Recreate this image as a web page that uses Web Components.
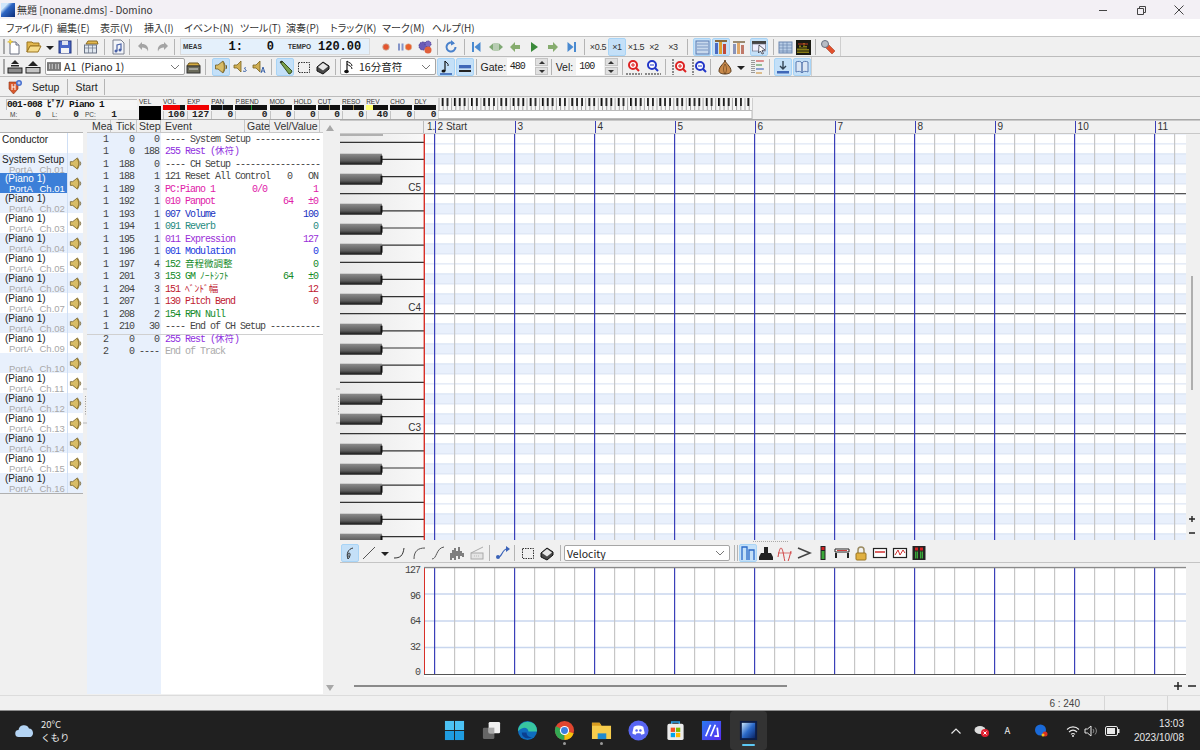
<!DOCTYPE html>
<html lang="ja">
<head>
<meta charset="utf-8">
<title>Domino</title>
<style>
  html, body { margin: 0; padding: 0; background: #f0f0f0; overflow: hidden; }
  body { width: 1200px; height: 750px; font-family: "Liberation Sans", "Noto Sans CJK JP", sans-serif; }
</style>
</head>
<body>
<dm-app></dm-app>
<script>
const UI_FONT = '"Noto Sans CJK JP", "Liberation Sans", sans-serif';
const LIST_FONT = '"Liberation Sans", "Noto Sans CJK JP", sans-serif';
const MONO_FONT = '"Liberation Mono", "Noto Sans CJK JP", monospace';

// 16x16 toolbar glyphs
const ICONS = {
  new: '<path d="M4 3h6l3 3v9H4z" fill="#fff" stroke="#6a7080"/><path d="M10 3v3h3" fill="#dde" stroke="#6a7080"/><path d="M4 0l1 2 2 .5-2 1-.5 2-1-2-2-.5 2-1z" fill="#f6d940" stroke="#c8a020" stroke-width=".4"/>',
  open: '<path d="M1 3h5l1 1h6v3H4l-3 6z" fill="#e3b84e" stroke="#9a7420"/><path d="M4 7h11l-3 6H1z" fill="#f6dc8a" stroke="#9a7420"/>',
  drop: '<path d="M4 7h8l-4 4z" fill="#222"/>',
  save: '<rect x="2" y="2" width="12" height="12" fill="#4a68c8" stroke="#23357c"/><rect x="5" y="2" width="6" height="4" fill="#dfe4f0"/><rect x="4" y="9" width="8" height="5" fill="#f4f4f4"/>',
  props: '<path d="M3 5l2-3h9l1 3z" fill="#e3b84e" stroke="#8a6a20"/><rect x="1.500" y="6" width="12" height="8" fill="#dfe6ee" stroke="#6a7486"/><path d="M2 9h11M5.500 6v8M9.500 6v8" stroke="#6a7486" stroke-width=".7"/>',
  page: '<path d="M3 1h8l3 3v11H3z" fill="#f2f4f8" stroke="#7a8090"/><path d="M7 12V6l4-1v6" fill="none" stroke="#4a62a8" stroke-width="1.2"/><circle cx="6" cy="12" r="1.5" fill="#4a62a8"/><circle cx="10" cy="11" r="1.5" fill="#4a62a8"/>',
  undo: '<path d="M6 3 2 7l4 4V8.500c3 0 5 1 6 4 1-5-2-7.500-6-7.500z" fill="#a4a4a4"/>',
  redo: '<path d="M10 3l4 4-4 4V8.500c-3 0-5 1-6 4-1-5 2-7.500 6-7.500z" fill="#a4a4a4"/>',
  rec: '<circle cx="8" cy="8" r="3.300" fill="#e4552f" stroke="#c8b8a8" stroke-width=".8"/>',
  pause: '<rect x="1" y="4.500" width="2" height="7" fill="#8494c8"/><rect x="4.500" y="4.500" width="2" height="7" fill="#8494c8"/><circle cx="11.500" cy="8" r="3.300" fill="#e8602c" stroke="#d8c0a8" stroke-width=".6"/>',
  gear: '<circle cx="6" cy="7" r="4" fill="#6a5ab8" stroke="#4a3c90" stroke-dasharray="1.500 1"/><circle cx="11" cy="5" r="3" fill="#7a6ac4" stroke="#4a3c90" stroke-dasharray="1.200 .8"/><circle cx="11" cy="11" r="3.500" fill="#e0603c"/>',
  loop: '<path d="M12.500 8a4.500 4.500 0 1 1-2-3.700" fill="none" stroke="#4a82cc" stroke-width="2"/><path d="M8 1l4 3.500-4 2z" fill="#4a82cc"/>',
  first: '<rect x="4" y="3" width="2" height="10" fill="#4a8ad0"/><path d="M12.500 3v10L6.500 8z" fill="#4a8ad0"/>',
  both: '<path d="M1 8l4.500-4v8zM15 8l-4.500-4v8z" fill="#7fa874"/><path d="M7 4v8M9 4v8" stroke="#7fa874"/>',
  prev: '<path d="M3 8l5-5v3h5v4H8v3z" fill="#86ac6e"/>',
  play: '<path d="M5 3l7 5-7 5z" fill="#3a8a3a"/>',
  next: '<path d="M13 8L8 3v3H3v4h5v3z" fill="#86ac6e"/>',
  last: '<rect x="10" y="3" width="2" height="10" fill="#4a8ad0"/><path d="M3.500 3v10l6-5z" fill="#4a8ad0"/>',
  list: '<rect x="2" y="2" width="13" height="13" fill="#c8d8ec" stroke="#5a7ab0"/><path d="M3 5h11M3 8h11M3 11h11" stroke="#7a98c4"/>',
  bars: '<rect x="2" y="4" width="3" height="11" fill="#4a6ac0"/><rect x="6" y="2" width="3" height="13" fill="#e0a030"/><rect x="10" y="5" width="3" height="10" fill="#c04a3a"/><path d="M2 1h12v2H2z" fill="#8a6a3a"/>',
  bars2: '<rect x="2" y="5" width="3" height="10" fill="#8a94b8"/><rect x="6" y="3" width="3" height="12" fill="#e0a868"/><rect x="10" y="6" width="3" height="9" fill="#c07a6a"/><path d="M2 2h12v2H2z" fill="#9a8a70"/>',
  cursor: '<rect x="1" y="2" width="14" height="3" fill="#444"/><rect x="1.500" y="5" width="13" height="7" fill="#eef" stroke="#667" stroke-width=".6"/><path d="M8 6l6 5-3 .5 1.500 3-1.500.5-1.500-3-2 2z" fill="#fff" stroke="#223" stroke-width=".7"/>',
  table: '<rect x="2" y="3" width="13" height="11" fill="#b8cde6" stroke="#6a86b0"/><path d="M2 6h13M2 9h13M2 12h13M6 3v11M10 3v11" stroke="#6a86b0" stroke-width=".7"/>',
  meter: '<rect x="1" y="1" width="15" height="15" fill="#1a1a12"/><path d="M3 14V9M5 14V6M7 14V8M9 14V4M11 14V7M13 14V10" stroke="#b8a818" stroke-width="1.400" stroke-dasharray="1 .5"/><path d="M3 5h10" stroke="#c03a20"/>',
  wrench: '<path d="M5 5l3 0 7 7-3 3-7-7z" fill="#e2502c" stroke="#98321a" stroke-width=".5"/><circle cx="5" cy="5" r="3.500" fill="#b8bcc4" stroke="#687080"/>',
  eject1: '<path d="M8 1l4 4H4z" fill="#222"/><rect x="4" y="6" width="8" height="1.500" fill="#222"/><rect x="1" y="9" width="14" height="5" fill="#8a8a8a" stroke="#222"/>',
  eject2: '<path d="M8 2l5 5H3z" fill="#222"/><rect x="1" y="8.500" width="14" height="5.500" fill="#c4c4c4" stroke="#222"/>',
  inst: '<path d="M2 7l2-3h9l2 3z" fill="#d6ac40" stroke="#6a5420"/><rect x="2" y="7" width="13" height="7" fill="#6a6a5a" stroke="#333"/><path d="M4 10h9" stroke="#ddd"/>',
  spk: '<path d="M2.500 6H5l5-4c1.500 2 2 4 2 6s-.5 4-2 6l-5-4H2.500z" fill="#d8bc66" stroke="#6e5a22" stroke-width=".8"/><path d="M10 3c1 2 1.300 3.500 1.300 5s-.3 3-1.300 5" fill="none" stroke="#8a6e28"/><path d="M13 6c.7 1.300.7 2.700 0 4" fill="none" stroke="#6e5a22"/>',
  spkS: '<path d="M2 6h3l4-4v11l-4-4H2z" fill="#cfae52" stroke="#7a6220" stroke-width=".8"/><path d="M14 9c-2-1-2 1 0 2 1 1-1 2-3 1" fill="none" stroke="#3a62a8"/>',
  spkA: '<path d="M2 6h3l4-4v11l-4-4H2z" fill="#cfae52" stroke="#7a6220" stroke-width=".8"/><path d="M10 14l2-6 2 6M11 12h2" fill="none" stroke="#3a62a8"/>',
  pencil: '<path d="M3 3l2-1 10 10-1 2-2 1z" fill="#7aa04a" stroke="#39521c"/><path d="M3 3l2-1 1 1-2 1z" fill="#222"/>',
  select: '<rect x="2.500" y="3.500" width="11" height="10" fill="none" stroke="#333" stroke-dasharray="1.500 1"/>',
  eraser: '<path d="M2 8l6-5 6 4v3l-6 5-6-3z" fill="#4a4a4a" stroke="#111"/><path d="M3 8l5-4 5 3.500-5 4z" fill="#e8e8e8"/>',
  noteLen: '<path d="M7 2v10" stroke="#111" stroke-width="1.200"/><path d="M7 2c1 2 4 2 3 5" fill="none" stroke="#111"/><ellipse cx="5.500" cy="12" rx="2" ry="1.500" fill="#111"/><path d="M2 15h12" stroke="#2a5ab0" stroke-width="1.500"/>',
  bar: '<rect x="2" y="6" width="12" height="3" fill="#3f68b8"/><rect x="2" y="11" width="12" height="2" fill="#222"/><rect x="2" y="9" width="12" height="1" fill="#9cb8e0"/>',
  zoomInH: '<circle cx="7" cy="6" r="4" fill="#fff" stroke="#d22" stroke-width="2"/><path d="M10 9l3 3" stroke="#d22" stroke-width="2"/><path d="M5 6h4M7 4v4" stroke="#d22"/><path d="M0 15h16" stroke="#222" stroke-dasharray="2 1"/>',
  zoomOutH: '<circle cx="7" cy="6" r="4" fill="#fff" stroke="#2236c8" stroke-width="2"/><path d="M10 9l3 3" stroke="#2236c8" stroke-width="2"/><path d="M5 6h4" stroke="#2236c8"/><path d="M0 15h16" stroke="#222" stroke-dasharray="2 1"/>',
  zoomInV: '<circle cx="9" cy="7" r="4" fill="#fff" stroke="#d22" stroke-width="2"/><path d="M12 10l3 3" stroke="#d22" stroke-width="2"/><path d="M7 7h4M9 5v4" stroke="#d22"/><path d="M2 0v16" stroke="#222" stroke-dasharray="2 1"/>',
  zoomOutV: '<circle cx="9" cy="7" r="4" fill="#fff" stroke="#2236c8" stroke-width="2"/><path d="M12 10l3 3" stroke="#2236c8" stroke-width="2"/><path d="M7 7h4" stroke="#2236c8"/><path d="M2 0v16" stroke="#222" stroke-dasharray="2 1"/>',
  onion: '<path d="M8 1c0 3 6 6 6 11 0 2-3 3-6 3s-6-1-6-3c0-5 6-8 6-11z" fill="#c8894a" stroke="#5a3a1a"/><path d="M8 5c-2 3-2 7 0 10M8 5c2 3 2 7 0 10" fill="none" stroke="#5a3a1a" stroke-width=".6"/>',
  tree: '<path d="M3 1v14M5 1v14" stroke="#444" stroke-dasharray="1 1"/><path d="M7 2h8" stroke="#d04a4a" stroke-width="1.200"/><path d="M7 6h6" stroke="#5a9a5a" stroke-width="1.200"/><path d="M7 10h8" stroke="#4a6ac0" stroke-width="1.200"/><path d="M7 14h6" stroke="#d09a4a" stroke-width="1.200"/>',
  down: '<path d="M8 2v8M5 7l3 3 3-3" fill="none" stroke="#345" stroke-width="1.400"/><rect x="2" y="12" width="12" height="2.500" fill="#3f68b8"/>',
  book: '<path d="M2 3c2-1 5-1 6 1v10c-1-2-4-2-6-1zM14 3c-2-1-5-1-6 1v10c1-2 4-2 6-1z" fill="#dce6f4" stroke="#5a7ab0"/>',
  setup: '<path d="M2 3h9v7l-4.500 5L2 10z" fill="#d8582c" stroke="#8a3418" stroke-width=".6"/><path d="M5 5v6M8 5v6M5 8h3" stroke="#fff"/><circle cx="12" cy="4" r="3" fill="#4a72d0"/><path d="M10.500 4h3M12 2.500v3" stroke="#fff" stroke-width=".8"/>',
  freehand: '<path d="M6 14c-2-5 0-10 5-11M6 14c2-2 3-6 1-6-2 1-1 4 1 4" fill="none" stroke="#333"/>',
  line: '<path d="M2 14L14 2" stroke="#555"/>',
  curve1: '<path d="M2 13c6 0 9-2 10-10" fill="none" stroke="#333"/>',
  curve2: '<path d="M3 14C3 6 7 3 14 3" fill="none" stroke="#555"/>',
  curve3: '<path d="M2 14c5 0 4-11 12-12" fill="none" stroke="#555"/>',
  wave: '<path d="M2 15V8M4 13V5M6 15V3M8 11V6M10 14V2M12 11V6M14 12V8" stroke="#222" stroke-width="1.100"/>',
  ramp: '<rect x="2" y="8" width="12" height="6" fill="#e4e4e4" stroke="#aaa"/><path d="M2 8l12-6" stroke="#aaa"/><path d="M5 11h6" stroke="#bbb" stroke-dasharray="1 1"/>',
  nodes: '<path d="M3 12c4 1 4-8 9-8" fill="none" stroke="#3a62b8" stroke-width="1.200"/><circle cx="3" cy="12" r="2" fill="#3a62b8"/><path d="M11 1l4 3-4 3z" fill="#3a62b8"/>',
  velocity: '<path d="M2 15V2h5v13M9 15V5h5v10" fill="none" stroke="#2a6ac8" stroke-width="1.300"/>',
  press: '<path d="M6 2h4v6h3l2 4v3H1v-3l2-4h3z" fill="#222"/>',
  sine: '<path d="M1 8h14" stroke="#d04040" stroke-width=".7"/><path d="M1 12c2-12 4-12 6 0s4 6 7-6" fill="none" stroke="#d04040"/>',
  gt: '<path d="M2 3l12 5-12 5" fill="none" stroke="#444" stroke-width="1.600"/>',
  lamp: '<rect x="5.500" y="1" width="5" height="14" fill="#222"/><rect x="6.500" y="2" width="3" height="3" fill="#d02020"/><rect x="6.500" y="6" width="3" height="8" fill="#3aa83a"/>',
  table2: '<path d="M1 4h14v3H1z" fill="#fff" stroke="#222"/><path d="M3 5.500h10" stroke="#d04040"/><path d="M2 8v5M14 8v5" stroke="#222" stroke-width="2"/>',
  lock: '<path d="M5 8V5a3 3 0 0 1 6 0v3" fill="none" stroke="#9a8a60" stroke-width="1.500"/><rect x="3" y="8" width="10" height="7" rx="1" fill="#e0b040" stroke="#9a7420"/>',
  bx1: '<rect x="1.500" y="3.500" width="13" height="9" fill="#fff" stroke="#222" stroke-width="1.200"/><path d="M3 7h10" stroke="#d03030" stroke-width="1.500"/>',
  bx2: '<rect x="1.500" y="3.500" width="13" height="9" fill="#fff" stroke="#222" stroke-width="1.200"/><path d="M3 10l3-5 2 5 3-5 2 3" fill="none" stroke="#d03030"/>',
  lamp2: '<rect x="1.500" y="1" width="13" height="14" fill="#222"/><path d="M4 4h3M9 4h3" stroke="#d02020" stroke-width="3"/><path d="M4 10h3M9 10h3" stroke="#3aa83a" stroke-width="7" stroke-dasharray="1.500 .5"/>'
};
const icon = (name, size = 16) => `<svg width="${size}" height="${size}" viewBox="0 0 16 16">${ICONS[name]}</svg>`;

// [centre x, what] - "*" marks a pressed button, "|" a separator
const ROWS = {
  main: { end: 840, items: [
    [4,'grip'],[14,'new'],[34,'open'],[50,'drop'],[65,'save'],[77,'|'],[91,'props'],[104,'|'],[118,'page'],[129,'|'],
    [144,'undo'],[162,'redo'],[174,'|'],[275,'#meas'],[386,'rec'],[405,'pause'],[425,'gear'],[437,'|'],[451,'loop'],[464,'|'],
    [476,'first'],[496,'both'],[515,'prev'],[534,'play'],[553,'next'],[572,'last'],[584,'|'],
    [598,'tx0.5'],[617,'tx1*'],[636,'tx1.5'],[654,'tx2'],[673,'tx3'],[687,'|'],
    [702,'list*'],[721,'bars*'],[739,'bars2'],[759,'cursor*'],[773,'|'],[785,'table'],[803,'meter'],[815,'|'],[828,'wrench']
  ]},
  track: { end: 813, items: [
    [4,'grip'],[15,'eject1'],[33,'eject2'],[115,'#track'],[193,'inst'],[205,'|'],[221,'spk*'],[240,'spkS'],[259,'spkA'],[271,'|'],
    [285,'pencil*'],[304,'select'],[323,'eraser'],[335,'|'],[388,'#note'],[446,'noteLen*'],[465,'bar*'],[476,'|'],
    [494,'#gatel'],[522,'#gate'],[543,'#spin'],[553,'|'],[566,'#vell'],[592,'#vel'],[613,'#spin'],[624,'|'],
    [636,'zoomInH'],[655,'zoomOutH'],[667,'|'],[681,'zoomInV'],[701,'zoomOutV'],[712,'|'],[727,'onion'],[743,'drop'],[759,'tree'],[771,'|'],
    [785,'down*'],[804,'book*']
  ]},
  setup: { end: 105, items: [[15,'setup'],[45,'#setup'],[66,'|'],[86,'#start'],[105,'|']] },
  velocity: { end: 0, items: [
    [350,'freehand*'],[369,'line'],[385,'drop'],[400,'curve1'],[419,'curve2'],[438,'curve3'],[457,'wave'],[477,'ramp'],[489,'|'],
    [503,'nodes'],[514,'|'],[528,'select'],[547,'eraser'],[560,'|'],[647,'#vcombo'],[734,'|'],[737,'|'],
    [747.5,'velocity*'],[766,'press'],[785,'sine'],[804,'gt'],[823,'lamp'],[842,'table2'],[861,'lock'],[880,'bx1'],[899.5,'bx2'],[919,'lamp2']
  ]}
};

class DmElement extends HTMLElement {
  constructor() {
    super();
    this.attachShadow({ mode: 'open' });
  }
  connectedCallback() {
    this.shadowRoot.innerHTML = `<style>${this.styles()}</style>${this.markup()}`;
  }
  styles() { return ':host { display: block; }'; }
  markup() { return '<slot></slot>'; }
}

class DmCombo extends DmElement {
  styles() {
    return `:host { display: flex; align-items: center; box-sizing: border-box; height: 17px; background: #fff; border: 1px solid #a6a6a6;
        border-radius: 2px; font: 10.5px ${UI_FONT}; color: #222; padding-left: 1px; overflow: hidden; }
      .txt { flex: 1; display: flex; align-items: center; gap: 3px; white-space: nowrap; }
      svg { flex: none; margin-right: 4px; }`;
  }
  markup() {
    return `<div class="txt"><slot></slot></div><svg width="10" height="6" viewBox="0 0 10 6"><path d="M1 1l4 4 4-4" fill="none" stroke="#777"/></svg>`;
  }
}

class DmSpin extends DmElement {
  styles() {
    return `:host { display: flex; flex-direction: column; width: 13px; height: 17px; gap: 1px; }
      div { flex: 1; background: #e0e0e0; border: 1px solid #c4c4c4; display: flex; align-items: center; justify-content: center; }
      i { width: 0; height: 0; border: 3px solid transparent; }
      .u { border-bottom: 3px solid #333; border-top: 0; }
      .d { border-top: 3px solid #333; border-bottom: 0; }`;
  }
  markup() { return '<div><i class="u"></i></div><div><i class="d"></i></div>'; }
}

class DmToolbar extends DmElement {
  styles() {
    return `:host { display: block; flex: none; height: 20px; box-sizing: border-box; border-bottom: 1px solid #bcbcbc; background: #f0f0f0; }
      .bar { display: flex; width: fit-content; align-items: center; height: 100%; box-sizing: border-box; }
      .bar.edge { border-right: 1px solid #cfcfcf; }
      .gap { flex: none; width: 0; height: 0; }
      .it { flex: none; display: flex; align-items: center; justify-content: center; box-sizing: border-box; }
      .btn { width: 18px; height: 18px; border-radius: 2px; border: 1px solid transparent; }
      .btn.on { background: #c4e0f8; border-color: #a8d4f6; }
      .tx { font: 9px ${LIST_FONT}; color: #333; letter-spacing: -.3px; }
      .sep { width: 1px; height: 16px; background: #b4b4b4; }
      .grip { width: 2px; height: 15px; background: #a8a8a8; }
      .lbl { font: 10.5px ${LIST_FONT}; color: #222; white-space: nowrap; }
      .num { width: 28px; height: 17px; background: #fff; font: 10px ${MONO_FONT}; letter-spacing: -1px; color: #222; padding-left: 3px; justify-content: flex-start; }
      .meas { width: 190px; height: 17px; background: #e4f0fb; border: 1px solid #dadada; color: #222; padding: 0 0 0 2px; justify-content: flex-start; }
      .meas b { white-space: pre; flex: none; }
      .small { font: bold 6.5px ${LIST_FONT}; color: #333; }
      .big { font: bold 12px ${MONO_FONT}; color: #111; text-align: right; }`;
  }
  special(key) {
    switch (key) {
      case '#meas': return [190, `<div class="it meas"><b class="small" style="width:17px">MEAS</b><b class="big" style="margin-left:28px;width:15px">1:</b><b class="big" style="margin-left:16px;width:15px">0</b><b class="small" style="margin-left:14px;width:20px">TEMPO</b><b class="big" style="margin-left:10px">120.00</b></div>`];
      case '#track': return [140, `<dm-combo style="width:140px"><svg width="14" height="9" viewBox="0 0 16 10"><rect width="16" height="10" fill="#777"/><path d="M3 2v6M6 2v6M10 2v6M13 2v6" stroke="#ddd"/></svg><span style="font-family:${LIST_FONT}">A1 &nbsp;(Piano 1)</span></dm-combo>`];
      case '#note': return [96, `<dm-combo style="width:96px"><svg width="12" height="14" viewBox="0 0 12 14" style="margin-left:2px"><path d="M3 1v10" stroke="#111" stroke-width="1.200"/><path d="M3 1c2 2 5 2 5 5M3 4c2 2 5 2 5 5" fill="none" stroke="#111"/><ellipse cx="2.500" cy="11.500" rx="2.300" ry="1.700" fill="#111"/></svg><span>16分音符</span></dm-combo>`];
      case '#gatel': return [27, `<div class="it lbl">Gate:</div>`];
      case '#vell': return [18, `<div class="it lbl">Vel:</div>`];
      case '#gate': return [28, `<div class="it num">480</div>`];
      case '#vel': return [28, `<div class="it num">100</div>`];
      case '#spin': return [13, `<dm-spin></dm-spin>`];
      case '#setup': return [26, `<div class="it lbl">Setup</div>`];
      case '#start': return [24, `<div class="it lbl">Start</div>`];
      case '#vcombo': return [166, `<dm-combo style="width:166px;height:16px;padding-left:2px;font-family:${LIST_FONT}"><span>Velocity</span></dm-combo>`];
    }
  }
  item(what) {
    if (what === '|') return [1, '<div class="it sep"></div>'];
    if (what === 'grip') return [2, '<div class="it grip"></div>'];
    if (what[0] === '#') return this.special(what);
    const on = what.endsWith('*');
    const name = on ? what.slice(0, -1) : what;
    const inner = name.startsWith('tx') ? `<span class="tx">×${name.slice(2)}</span>` : icon(name);
    return [18, `<div class="it btn${on ? ' on' : ''}">${inner}</div>`];
  }
  markup() {
    const row = ROWS[this.getAttribute('row')];
    let cursor = Number(this.getAttribute('origin') || 0);
    const html = row.items.map(([cx, what]) => {
      const [w, h] = this.item(what);
      const gap = cx - w / 2 - cursor;
      cursor = cx + w / 2;
      return `<span class="gap" style="margin-left:${gap}px"></span>${h}`;
    }).join('');
    const tail = row.end > cursor ? `<span class="gap" style="margin-left:${row.end - cursor}px"></span>` : '';
    return `<div class="bar${row.end > 200 ? ' edge' : ''}">${html}${tail}</div>`;
  }
}

class DmTitlebar extends DmElement {
  styles() {
    return `:host { display: flex; flex: none; align-items: center; height: 19px; background: #f3f0f5; font: 10px ${UI_FONT}; color: #333; padding-right: 2px; box-sizing: border-box; }
      .logo { width: 14px; height: 14px; margin: 0 2px 0 1px; background: linear-gradient(135deg, #cfe6fb 0 25%, #2e66c4 45%, #0c2c78); }
      .t { flex: 1; }
      svg { display: block; }
      .w { width: 38px; display: flex; justify-content: center; }`;
  }
  markup() {
    return `<div class="logo"></div><div class="t">無題 [noname.dms] - Domino</div>
      <div class="w"><svg width="10" height="10"><path d="M1 5.500h8" stroke="#444"/></svg></div>
      <div class="w"><svg width="10" height="10"><path d="M1.500 3.500h6v6h-6zM3.500 3V1.500h6v6H8" fill="none" stroke="#444"/></svg></div>
      <div class="w"><svg width="10" height="10"><path d="M.5.5l9 9M9.500.5l-9 9" stroke="#444"/></svg></div>`;
  }
}

class DmMenubar extends DmElement {
  styles() {
    return `:host { display: flex; flex: none; align-items: center; height: 18px; box-sizing: border-box; background: #fff; font: 10px ${UI_FONT}; font-feature-settings: "palt"; color: #333;
        border-bottom: 1px solid #c4c4c4; padding-left: 6px; white-space: nowrap; }
      span { flex: none; }`;
  }
  markup() {
    const items = [['ファイル(F)',39],['編集(E)',31],['表示(V)',32],['挿入(I)',28],['イベント(N)',44],['ツール(T)',34],['演奏(P)',32],['トラック(K)',40],['マーク(M)',38],['ヘルプ(H)',38]];
    return items.map(([t, w], i) => `<span style="width:${w}px;margin-right:${i < 9 ? 12 : 0}px">${t}</span>`).join('');
  }
}

class DmStrip extends DmElement {
  styles() {
    return `:host { display: flex; flex-direction: column; width: 22px; flex: none; }
      .l { height: 6px; font: 6.5px/7px ${LIST_FONT}; color: #333; white-space: nowrap; }
      .b { height: 6.5px; background: #111; position: relative; margin-top: .5px; }
      .b i { position: absolute; top: 0; bottom: 0; display: block; }
      .v { height: 8px; margin-top: 1px; font: bold 9.5px/8px ${MONO_FONT}; color: #222; text-align: right; border-left: 1px solid #c4c4c4; }`;
  }
  markup() {
    const a = this.getAttribute.bind(this);
    const fill = a('fill') ? `<i style="left:0;width:${a('fill')};background:${a('color')}"></i>` : '';
    const tick = a('tick') ? `<i style="left:50%;width:1px;background:${a('tick')}"></i>` : '';
    return `<div class="l">${a('label')}</div><div class="b">${fill}${tick}</div><div class="v">${a('value')}</div>`;
  }
}

class DmMixer extends DmElement {
  styles() {
    return `:host { display: flex; flex: none; height: 23px; box-sizing: border-box; border-bottom: 1px solid #a8a8a8; background: #f0f0f0; padding-top: 1px; }
      .info { width: 131px; margin: 1px 2px 0 6px; flex: none; }
      .name { height: 10px; font: bold 9.5px/10px ${MONO_FONT}; letter-spacing: -.7px; background: #f6f6f6; border-top: 1px solid #bbb; border-left: 1px solid #bbb; color: #111; white-space: pre; }
      .sub { display: flex; font: 6.5px/9px ${LIST_FONT}; color: #444; margin-top: 0; }
      .sub span { flex: none; }
      .sub b { flex: none; width: 22px; font: bold 9.5px/9px ${MONO_FONT}; color: #222; text-align: right; border-bottom: 1px solid #ccc; box-sizing: border-box; padding-right: 1px; }
      .vel { width: 22px; flex: none; font: 6.5px/7px ${LIST_FONT}; color: #333; margin-right: 2px; }
      .vel div { height: 14px; background: #000; margin-top: .5px; }
      .strips { display: flex; gap: 2.15px; flex: none; }
      .keys { flex: none; margin-left: 2px; width: 314px; height: 21px; border-right: 1px solid #cfcfcf; }
      svg { display: block; }`;
  }
  markup() {
    const strips = [
      ['VOL','100','fill="78%" color="#f00000"'],['EXP','127','fill="100%" color="#f00000"'],['PAN','0','tick="#6a7e90"'],
      ['P.BEND','0','tick="#1a9a30" style="width:32px"'],['MOD','0',''],['HOLD','0',''],['CUT','0','tick="#a08850"'],['RESO','0','tick="#a08850"'],
      ['REV','40','fill="30%" color="#ffff70"'],['CHO','0',''],['DLY','0','']
    ].map(([l, v, x]) => `<dm-strip label="${l}" value="${v}" ${x}></dm-strip>`).join('');
    let keys = '';
    const octave = 313 / (128 / 12);
    [1, 3, 6, 8, 10].forEach(n => {
      for (let o = 0; o < 11; o++) {
        const x = 1 + (o * octave) + (n + 0.1) * octave / 12;
        if (x < 312) keys += `<rect x="${x.toFixed(1)}" y="0" width="1.800" height="8" fill="#111"/>`;
      }
    });
    for (let i = 0; i < 75; i++) {
      keys += `<path d="M${(1 + i * octave / 7).toFixed(1)} 0v12" stroke="#555" stroke-width=".5"/>`;
    }
    return `<div class="info"><div class="name">001-008 ﾋﾟｱﾉ Piano 1</div>
        <div class="sub"><span style="margin-left:4px;width:7px">M:</span><b style="margin-left:3px">0</b><span style="margin-left:10px;width:5px">L:</span><b style="margin-left:1px">0</b><span style="margin-left:5px;width:11px">PC:</span><b>1</b></div></div>
      <div class="vel">VEL<div></div></div>
      <div class="strips">${strips}</div>
      <div class="keys"><svg width="314" height="21"><rect width="314" height="12" fill="#f6f6f6"/>${keys}<rect y="12.500" width="314" height="8" fill="#fff" stroke="#bbb"/></svg></div>`;
  }
}

class DmTracklist extends DmElement {
  styles() {
    return `:host { display: flex; flex-direction: column; width: 83px; flex: none; background: #f0f0f0; font: 10px/9.5px ${LIST_FONT}; color: #222; }
      .head { height: 13px; flex: none; box-sizing: border-box; border-bottom: 1px solid #b4b4b4; }
      .row { display: flex; flex: none; height: 20px; background: #fff; box-sizing: border-box; }
      .row.b { background: #e8f0fc; }
      .row.s { background: #3c7fd8; color: #fff; }
      .row.s .p { color: #fff; }
      .txt { width: 68px; flex: none; box-sizing: border-box; padding: 1px 0 0 5px; white-space: pre; border-right: 1px solid #cfdff5; }
      .p { color: #a8a8a8; padding-left: 4px; font-size: 9.5px; word-spacing: 1px; }
      .sp { flex: 1; display: flex; align-items: center; justify-content: center; }
      .row.s .sp { background: #e8f0fc; }
      .end { height: 1px; flex: none; background: #b0b0b0; }`;
  }
  markup() {
    const sp = `<div class="sp">${icon('spk', 15)}</div>`;
    let rows = `<div class="row"><div class="txt" style="padding:2px 0 0 2px">Conductor</div></div>
      <div class="row b"><div class="txt" style="padding:2px 0 0 2px">System Setup<div class="p" style="padding-left:7px">PortA  Ch.01</div></div>${sp}</div>`;
    for (let ch = 1; ch <= 16; ch++) {
      const cls = ch === 1 ? 's' : (ch % 2 === 0 ? 'b' : '');
      const name = ch === 10 ? '&nbsp;' : '(Piano 1)';
      rows += `<div class="row ${cls}"><div class="txt">${name}<div class="p">PortA  Ch.${String(ch).padStart(2, '0')}</div></div>${sp}</div>`;
    }
    return `<div class="head"></div>${rows}<div class="end"></div>`;
  }
}

class DmEventlist extends DmElement {
  styles() {
    return `:host { display: flex; flex-direction: column; width: 236px; flex: none; height: 574px; background: #fff; }
      .head { display: flex; flex: none; height: 13px; box-sizing: border-box; background: #f0f0f0; border-bottom: 1px solid #c8c8c8; font: 10.5px/12px ${LIST_FONT}; color: #333; }
      .head span { box-sizing: border-box; border-right: 1px solid #c8c8c8; flex: none; }
      .body { flex: 1; display: flex; flex-direction: column; background: linear-gradient(90deg, #e8f0fc 74px, #fff 74px); font: 10px/12.5px ${MONO_FONT}; letter-spacing: -1px; color: #444; }
      .r { display: flex; height: 12.5px; white-space: pre; flex: none; }
      .r.ln { box-shadow: 0 1px 0 #d0d0d0; }
      .c { flex: none; text-align: right; box-sizing: border-box; }
      .ev { flex: none; width: 89px; padding-left: 4px; text-align: left; }
      .kana { letter-spacing: 0; font-size: 9.5px; }
      .g { width: 43px; }
      .v { width: 25px; }`;
  }
  markup() {
    const S = '#454545', P = '#9030e0', K = '#e020a8', N = '#2030c0', T = '#1f8a80', X = '#9a30d8', M = '#2038e0', G = '#148a28', R = '#c02030', H = '#aaa';
    const rows = [
      [1,0,0,'---- System Setup -------------',S],
      [1,0,188,'255 Rest (<span class="kana">休符</span>)',P],
      [1,188,0,'---- CH Setup -----------------',S],
      [1,188,1,'121 Reset All Control',S,'0','ON'],
      [1,189,3,'PC:Piano 1',K,'0/0  ','1'],
      [1,192,1,'010 Panpot',K,'64','±0'],
      [1,193,1,'007 Volume',N,'','100'],
      [1,194,1,'091 Reverb',T,'','0'],
      [1,195,1,'011 Expression',X,'','127'],
      [1,196,1,'001 Modulation',M,'','0'],
      [1,197,4,'152 <span class="kana">音程微調整</span>',G,'','0'],
      [1,201,3,'153 GM <span class="kana">ﾉｰﾄｼﾌﾄ</span>',G,'64','±0'],
      [1,204,3,'151 <span class="kana">ﾍﾞﾝﾄﾞ幅</span>',R,'','12'],
      [1,207,1,'130 Pitch Bend',R,'','0'],
      [1,208,2,'154 RPN Null',G],
      [1,210,30,'---- End of CH Setup ----------',S],
      [2,0,0,'255 Rest (<span class="kana">休符</span>)',P],
      [2,0,'----','End of Track',H]
    ];
    const body = rows.map(([m, t, st, ev, col, g = '', v = ''], i) => {
      const gate = g === '0/0  ' ? `<div class="c g" style="padding-right:26px">0/0</div>` : `<div class="c g" style="padding-right:${g === '0' ? 1 : 0}px">${g}</div>`;
      return `<div class="r${i === 15 ? ' ln' : ''}" style="color:${col}"><div class="c" style="width:21px;color:#444">${m}</div><div class="c" style="width:26px;color:#444">${t}</div><div class="c" style="width:27px;color:#444;padding-right:2px">${st}</div><div class="c ev">${ev}</div>${gate}<div class="c v">${v}</div></div>`;
    }).join('');
    return `<div class="head"><span style="width:24px;padding-left:5px">Mea</span><span style="width:26px;padding-left:5px">Tick</span><span style="width:24px;padding-left:2px">Step</span><span style="width:84px;padding-left:4px">Event</span><span style="width:25px;padding-left:2px">Gate</span><span style="width:50px;padding-left:4px;white-space:nowrap">Vel/Value</span></div>
      <div class="body"><div style="height:.5px;flex:none"></div>${body}</div>`;
  }
}

class DmVscroll extends DmElement {
  styles() {
    return `:host { display: flex; flex-direction: column; justify-content: space-between; align-items: center; width: 13px; flex: none; height: 574px; padding: 5px 0 3px; box-sizing: border-box; background: #f0f0f0; }
      i { width: 0; height: 0; border: 4px solid transparent; }
      .u { border-bottom: 6px solid #a8a8a8; border-top: 0; }
      .d { border-top: 6px solid #a8a8a8; border-bottom: 0; }`;
  }
  markup() { return '<i class="u"></i><i class="d"></i>'; }
}

// grip marks on the draggable pane dividers
class DmSplit extends DmElement {
  styles() {
    return `:host { display: block; width: 4px; flex: none; height: 575px; background: #f0f0f0; }
      svg { display: block; }`;
  }
  markup() {
    return `<svg width="4" height="575"><path d="M0 269h4M0 303h4" stroke="#b8b8b8"/><path d="M2.500 276v20" stroke="#999" stroke-dasharray="1 1.500"/></svg>`;
  }
}

// vertical bar lines shared by the roll and the velocity pane, x measured from the pane's left edge
const gridLines = (h) => {
  let s = '';
  for (let x = 30.6; x < 762; x += 20) {
    if ((x - 10.6) % 80 > 0.1) s += `<path d="M${x.toFixed(1)} 0v${h}" stroke="#c6c6c6" stroke-width="1.200"/>`;
  }
  for (let x = 10.6; x < 762; x += 80) s += `<path d="M${x.toFixed(1)} 0v${h}" stroke="#3a3fb8" stroke-width="1.200"/>`;
  s += `<path d="M.3 0v${h}" stroke="#d83028" stroke-width="1.400"/>`;
  return s;
};

class DmRoll extends DmElement {
  styles() {
    return `:host { display: block; width: 860px; flex: none; background: #f0f0f0; }
      .ruler { display: flex; height: 14px; box-sizing: border-box; overflow: hidden; background: #f0f0f0; border-bottom: 1px solid #c8c8c8; border-top: 1px solid #c8c8c8; font: 10px/12px ${LIST_FONT}; color: #333; }
      .corner { width: 84px; flex: none; border-right: 1px solid #bbb; box-sizing: border-box; }
      .tick { flex: none; box-sizing: border-box; padding-left: 2px; width: 80px; border-left: 1px solid #3a3fb8; white-space: nowrap; }
      svg { display: block; }
      svg text { font: 10px ${LIST_FONT}; fill: #333; }`;
  }
  markup() {
    const W = 860, H = 406, K = 84, G = W - 14;
    const off = 59.7;
    let bands = '', keys = '', cLines = '';
    for (let oct = -1; oct < 3; oct++) {
      const base = off + oct * 120;
      [10, 30, 50, 80, 100].forEach(d => { bands += `<rect x="${K}" y="${base + d}" width="${G - K}" height="10" fill="#e9f0fc"/>`; });
      for (let i = 0; i < 12; i++) bands += `<path d="M${K} ${base + i * 10 + 0.2}h${G - K}" stroke="#d6e0f2"/>`;
      for (let i = 0; i < 7; i++) {
        keys += `<path d="M0 ${(base + i * 120 / 7).toFixed(1)}h${K}" stroke="#333" stroke-width="1.200"/>`;
      }
      [10, 30, 50, 80, 100].forEach(d => {
        keys += `<rect x="0" y="${base + d}" width="42" height="11" fill="url(#blk)"/><rect x="40.500" y="${base + d + 2}" width="2" height="7" fill="#111"/>`;
      });
      cLines += `<path d="M0 ${base}h${G - K}" stroke="#555" stroke-width="1.200"/>`;
    }
    let labels = '';
    [['C5', off], ['C4', off + 120], ['C3', off + 240]].forEach(([t, y]) => {
      labels += `<text x="81" y="${y - 2.5}" text-anchor="end">${t}</text>`;
    });
    const ticks = [3,4,5,6,7,8,9,10,11].map(n => `<div class="tick">${n}</div>`).join('');
    return `<div class="ruler"><div class="corner"></div><div class="tick" style="width:10.6px;border:0;padding-left:3px">1.</div><div class="tick">2 Start</div>${ticks}</div>
      <svg width="${W}" height="${H}" viewBox="0 0 ${W} ${H}">
        <defs>
          <linearGradient id="blk" x1="0" x2="0" y1="0" y2="1"><stop offset="0" stop-color="#8c8c8c"/><stop offset=".65" stop-color="#5a5a5a"/><stop offset="1" stop-color="#111"/></linearGradient>
          <linearGradient id="wht" x1="0" x2="1" y1="0" y2="0"><stop offset="0" stop-color="#e8e8e8"/><stop offset="1" stop-color="#f8f8f8"/></linearGradient>
        </defs>
        <rect width="${K}" height="${H}" fill="url(#wht)"/>
        <rect x="${K}" width="${G - K}" height="${H}" fill="#fff"/>
        ${bands}${keys}${labels}
        <rect y="0" width="43" height="2" fill="#b0b0b0"/>
        <g transform="translate(${K} 0)">${cLines}${gridLines(H)}</g>
        <rect x="${G}" width="14" height="${H}" fill="#f0f0f0"/>
        <path d="M${W - 8} 142v114" stroke="#9a9a9a" stroke-width="1.500"/>
        <path d="M${W - 11} 385h6M${W - 8} 382v6M${W - 11} 399h6" stroke="#222" stroke-width="1.400"/>
      </svg>`;
  }
}

class DmVelocity extends DmElement {
  styles() {
    return `:host { display: block; width: 860px; flex: none; height: 155px; position: relative; }
      .pane { display: flex; height: 113px; margin-top: 1px; }
      .scale { width: 84px; flex: none; display: flex; flex-direction: column; align-items: flex-end; font: 10px/13px ${MONO_FONT}; letter-spacing: -1px; color: #444; box-sizing: border-box; padding: 0 4px 0 0; gap: 12.5px; background: #f0f0f0; }
      svg { display: block; flex: none; }
      .hs { height: 18px; display: flex; align-items: center; }
      .th { margin-left: 14px; width: 433px; height: 2px; background: #8a8a8a; }
      .pm { margin-left: auto; display: flex; gap: 6px; margin-right: 4px; }
      .grip { position: absolute; left: 413px; top: 1px; width: 35px; border-top: 1px dotted #aaa; }`;
  }
  markup() {
    const w = 762, h = 113;
    const lines = [30, 57, 83.5].map(y => `<path d="M0 ${y}h${w}" stroke="#c8d6ee" stroke-width="1.500"/>`).join('');
    return `<dm-toolbar row="velocity" origin="340" style="margin-top:1px;height:22px;padding-top:3px;border-bottom-color:#c4c4c4"></dm-toolbar>
      <div class="grip"></div>
      <div class="pane">
        <div class="scale"><span>127</span><span>96</span><span>64</span><span>32</span><span>0</span></div>
        <svg width="${w}" height="${h}"><rect width="${w}" height="${h - 2}" y="2" fill="#fff"/>${lines}<g transform="translate(0 3)">${gridLines(107)}</g>
          <path d="M0 3.500h${w}" stroke="#8a8a8a" stroke-width="1.500"/><path d="M0 110.500h${w}" stroke="#555" stroke-width="1.200"/></svg>
      </div>
      <div class="hs"><div class="th"></div><div class="pm"><svg width="8" height="8"><path d="M0 4h8M4 0v8" stroke="#222" stroke-width="1.500"/></svg><svg width="8" height="8"><path d="M0 4h8" stroke="#222" stroke-width="1.500"/></svg></div></div>`;
  }
}

class DmStatusbar extends DmElement {
  styles() {
    return `:host { display: flex; flex: none; height: 15px; background: #f0f0f0; border-top: 1px solid #dcdcdc; box-sizing: border-box; font: 10px/15px ${LIST_FONT}; color: #444; }
      div { box-sizing: border-box; flex: none; }
      .a { width: 1105px; text-align: right; padding-right: 24px; border-right: 1px solid #d6d6d6; }
      .b { width: 63px; border-right: 1px solid #d6d6d6; }`;
  }
  markup() { return '<div class="a">6 : 240</div><div class="b"></div>'; }
}

class DmTaskbar extends DmElement {
  styles() {
    return `:host { display: flex; flex: none; align-items: center; height: 40px; box-sizing: border-box; background: #202020; border-top: 1px solid #8c8c8c; color: #e8e8e8; font: 9.5px/12.5px ${UI_FONT}; }
      .weather { display: flex; align-items: center; gap: 6px; margin-left: 15px; width: 60px; flex: none; }
      .apps { display: flex; margin-left: 361px; flex: none; }
      .app { width: 36.8px; height: 39px; display: flex; align-items: center; justify-content: center; position: relative; flex: none; }
      .app.on { background: #333; border-radius: 4px; }
      .app.on::after { content: ""; position: absolute; bottom: 4px; width: 13px; height: 2.5px; border-radius: 2px; background: #5cc8f4; }
      .app.run::after { content: ""; position: absolute; bottom: 5px; width: 3px; height: 3px; border-radius: 50%; background: #999; }
      .tray { margin-left: auto; display: flex; align-items: center; flex: none; }
      .clock { text-align: right; width: 56px; margin: 0 16px 0 0; font-family: ${LIST_FONT}; font-size: 10px; line-height: 13.5px; }
      svg { display: block; flex: none; }`;
  }
  markup() {
    const svg = (inner, s = 21) => `<svg width="${s}" height="${s}" viewBox="0 0 22 22">${inner}</svg>`;
    const apps = [
      ['', '<rect x="1" y="1" width="9.500" height="9.500" fill="#4cc2f4"/><rect x="11.500" y="1" width="9.500" height="9.500" fill="#4cc2f4"/><rect x="1" y="11.500" width="9.500" height="9.500" fill="#1f9ce0"/><rect x="11.500" y="11.500" width="9.500" height="9.500" fill="#1f9ce0"/>'],
      ['', '<rect x="2" y="8" width="12" height="12" rx="1.500" fill="#666"/><rect x="8" y="2" width="12" height="12" rx="1.500" fill="#f0f0f0"/><rect x="8" y="8" width="6" height="6" fill="#aaa"/>'],
      ['', '<circle cx="11" cy="11" r="10" fill="#0f6cbd"/><path d="M1 11C2 3 10 0 16 3c4 2 5 6 5 9h-9c0-3-4-5-7-3-3 1-3 3-4 2z" fill="#38c6a0"/><path d="M5 13c0 5 6 8 11 5-4 0-6-2-6-5z" fill="#0a3f90"/>'],
      ['run', '<circle cx="11" cy="11" r="10" fill="#e0452f"/><path d="M11 11 2 6.500A10 10 0 0 0 11 21z" fill="#34a853"/><path d="M11 11l9.500 3A10 10 0 0 1 11 21z" fill="#f4c20d"/><circle cx="11" cy="11" r="4.800" fill="#fff"/><circle cx="11" cy="11" r="3.600" fill="#3c7fe0"/>'],
      ['run', '<path d="M1 3h8l2 3h10v14H1z" fill="#f6cc4c"/><path d="M1 3h8l2 3H1z" fill="#d89c20"/><rect x="7" y="14" width="9" height="6" fill="#1f8ad0"/>'],
      ['', '<circle cx="11" cy="11" r="10.500" fill="#5865f2"/><path d="M6 7c3-1.500 7-1.500 10 0l1.500 7c-1 1-2.500 1.500-3.500 1.500l-1-1.500h-4l-1 1.500c-1 0-2.500-.5-3.500-1.500z" fill="#fff"/><circle cx="9" cy="11" r="1.300" fill="#5865f2"/><circle cx="13" cy="11" r="1.300" fill="#5865f2"/>'],
      ['', '<path d="M7 5V2h8v3" fill="none" stroke="#2aa0e8" stroke-width="1.500"/><rect x="2.500" y="4" width="17" height="17" rx="2" fill="#ececec"/><rect x="6" y="8" width="4.500" height="4.500" fill="#f25022"/><rect x="11.500" y="8" width="4.500" height="4.500" fill="#7fba00"/><rect x="6" y="13.500" width="4.500" height="4.500" fill="#00a4ef"/><rect x="11.500" y="13.500" width="4.500" height="4.500" fill="#ffb900"/>'],
      ['', '<defs><linearGradient id="vs" x1="0" y1="0" x2="1" y2="1"><stop offset="0" stop-color="#2a7af0"/><stop offset="1" stop-color="#5a2af0"/></linearGradient></defs><rect x="1" y="1" width="20" height="20" fill="url(#vs)"/><path d="M5 17L10 5M10 17l5-12M14 17h4l-1-9" fill="none" stroke="#fff" stroke-width="1.800"/>'],
      ['on', '<defs><linearGradient id="dm" x1="0" y1="0" x2="1" y2="1"><stop offset="0" stop-color="#c8e4fa"/><stop offset=".5" stop-color="#2a68c8"/><stop offset="1" stop-color="#0a2464"/></linearGradient></defs><rect x="2" y="1" width="18" height="20" fill="#0c1c44"/><rect x="4" y="3" width="14" height="16" fill="url(#dm)"/>']
    ].map(([c, inner]) => `<div class="app ${c}">${svg(inner)}</div>`).join('');
    return `<div class="weather"><svg width="20" height="15" viewBox="0 0 20 15"><path d="M4 14a3.500 3.500 0 0 1-.5-7A5.500 5.500 0 0 1 14 5.500 4.500 4.500 0 0 1 15.500 14z" fill="#b4d4f4"/></svg><div>20°C<br>くもり</div></div>
      <div class="apps">${apps}</div>
      <div class="tray">
        <svg width="12" height="8" style="margin-right:12px" viewBox="0 0 12 8"><path d="M1.500 6.500 6 2l4.500 4.500" fill="none" stroke="#e8e8e8" stroke-width="1.200"/></svg>
        <svg width="16" height="14" style="margin-right:14.500px" viewBox="0 0 16 14"><ellipse cx="6" cy="6" rx="5.500" ry="4" fill="#ddd"/><circle cx="11" cy="9" r="4" fill="#e02030"/><path d="M9.500 7.500l3 3M12.500 7.500l-3 3" stroke="#fff"/></svg>
        <span style="width:9px;margin-right:20.500px;font:bold 11.5px ${LIST_FONT};color:#b8b8b8">A</span>
        <svg width="14" height="13" style="margin-right:18px" viewBox="0 0 14 13"><circle cx="6.500" cy="6" r="5.500" fill="#1a6ad8"/><circle cx="11" cy="10" r="2.500" fill="#d83020"/><circle cx="9" cy="11" r="1.500" fill="#f0c020"/></svg>
        <svg width="14" height="12" style="margin-right:3.500px" viewBox="0 0 14 12"><path d="M1 4.500c3.500-3.500 8.500-3.500 12 0M3 7c2.500-2.300 5.500-2.300 8 0M5 9.300c1.200-1 2.800-1 4 0" fill="none" stroke="#e8e8e8" stroke-width="1.100"/><circle cx="7" cy="11" r="1" fill="#e8e8e8"/></svg>
        <svg width="15" height="12" style="margin-right:6.500px" viewBox="0 0 15 12"><path d="M1 4h2.500L7 1v10L3.500 8H1z" fill="none" stroke="#e8e8e8"/><path d="M9 4a3 3 0 0 1 0 4M11 2.500a5 5 0 0 1 0 7" fill="none" stroke="#888"/></svg>
        <svg width="15" height="10" style="margin-right:8px" viewBox="0 0 15 10"><rect x=".5" y=".5" width="12" height="9" rx="1.500" fill="none" stroke="#e8e8e8"/><rect x="2" y="2" width="8" height="6" fill="#e8e8e8"/><rect x="13" y="3" width="1.500" height="4" fill="#e8e8e8"/></svg>
        <div class="clock">13:03<br>2023/10/08</div>
      </div>`;
  }
}

class DmApp extends DmElement {
  styles() {
    return `:host { display: flex; flex-direction: column; width: 1200px; height: 750px; overflow: hidden; background: #f0f0f0; }
      .main { display: flex; height: 575px; flex: none; }
      .right { display: flex; flex-direction: column; flex: none; width: 860px; }`;
  }
  markup() {
    return `<dm-titlebar></dm-titlebar>
      <dm-menubar></dm-menubar>
      <dm-toolbar row="main"></dm-toolbar>
      <dm-toolbar row="track"></dm-toolbar>
      <dm-toolbar row="setup"></dm-toolbar>
      <dm-mixer></dm-mixer>
      <div class="main">
        <dm-tracklist></dm-tracklist>
        <dm-split></dm-split>
        <dm-eventlist></dm-eventlist>
        <dm-vscroll></dm-vscroll>
        <dm-split></dm-split>
        <div class="right"><dm-roll></dm-roll><dm-velocity></dm-velocity></div>
      </div>
      <dm-statusbar></dm-statusbar>
      <dm-taskbar></dm-taskbar>`;
  }
}

// Register the custom elements
customElements.define('dm-combo', DmCombo);
customElements.define('dm-spin', DmSpin);
customElements.define('dm-toolbar', DmToolbar);
customElements.define('dm-titlebar', DmTitlebar);
customElements.define('dm-menubar', DmMenubar);
customElements.define('dm-strip', DmStrip);
customElements.define('dm-mixer', DmMixer);
customElements.define('dm-tracklist', DmTracklist);
customElements.define('dm-eventlist', DmEventlist);
customElements.define('dm-vscroll', DmVscroll);
customElements.define('dm-split', DmSplit);
customElements.define('dm-roll', DmRoll);
customElements.define('dm-velocity', DmVelocity);
customElements.define('dm-statusbar', DmStatusbar);
customElements.define('dm-taskbar', DmTaskbar);
customElements.define('dm-app', DmApp);
</script>
</body>
</html>
